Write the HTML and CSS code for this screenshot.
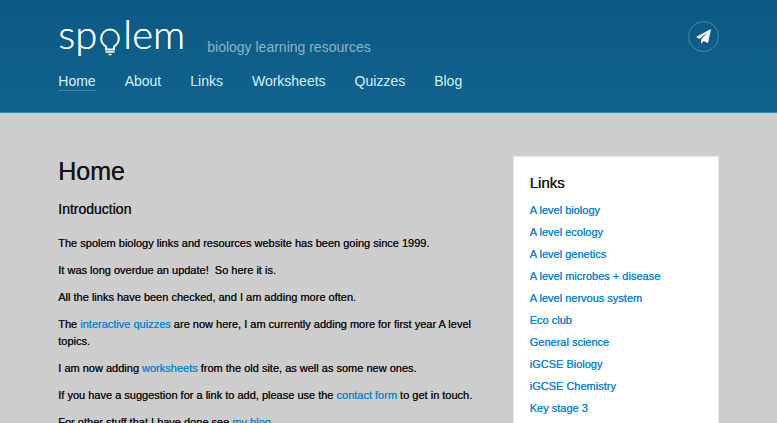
FILE: index.html
```html
<!DOCTYPE html>
<html lang="en">
    <head>
        <meta charset="utf-8">
        <title>Spolem</title>
        <link rel="stylesheet" href="styles.css">
    </head>
    <body>
        <header class="header">
            <div class="container">
                <div class="header-top">
                    <div class="brand">
                        <a class="logo" href="#" aria-label="spolem">
                            <span>sp</span>
                            <svg class="bulb" width="20" height="30" viewBox="0 0 20 30" fill="none" stroke="#fff" stroke-width="2">
                                <path d="M6 23.500v-3C2.800 18.500 1.200 15.500 1.200 12.500a8.800 9 0 0 1 17.600 0c0 3-1.600 6-4.800 8v3z"/>
                                <path d="M5.500 26h9M8.500 28.500h3" stroke-width="1.300"/>
                            </svg>
                            <span>lem</span>
                        </a>
                        <span class="tagline">biology learning resources</span>
                    </div>
                    <a class="contact" href="#" aria-label="Contact">
                        <svg width="15" height="15" viewBox="0 0 15 15" fill="#fff">
                            <path d="M15 0L0 8l3.500 1.800L12 3 5.200 10.300V15l2.300-2.900L12 14z"/>
                        </svg>
                    </a>
                </div>
                <nav class="nav">
                    <a class="active" href="#">Home</a>
                    <a href="#">About</a>
                    <a href="#">Links</a>
                    <a href="#">Worksheets</a>
                    <a href="#">Quizzes</a>
                    <a href="#">Blog</a>
                </nav>
            </div>
        </header>

        <div class="container page">
            <main class="content">
                <h1>Home</h1>
                <h2>Introduction</h2>
                <p>The spolem biology links and resources website has been going since 1999.</p>
                <p>It was long overdue an update!&nbsp; So here it is.</p>
                <p>All the links have been checked, and I am adding more often.</p>
                <p>The <a href="#">interactive quizzes</a> are now here, I am currently adding more for first year A level topics.</p>
                <p>I am now adding <a href="#">worksheets</a> from the old site, as well as some new ones.</p>
                <p>If you have a suggestion for a link to add, please use the <a href="#">contact form</a> to get in touch.</p>
                <p>For other stuff that I have done see <a href="#">my blog</a>.</p>
            </main>

            <aside class="sidebar">
                <h3>Links</h3>
                <ul>
                    <li><a href="#">A level biology</a></li>
                    <li><a href="#">A level ecology</a></li>
                    <li><a href="#">A level genetics</a></li>
                    <li><a href="#">A level microbes + disease</a></li>
                    <li><a href="#">A level nervous system</a></li>
                    <li><a href="#">Eco club</a></li>
                    <li><a href="#">General science</a></li>
                    <li><a href="#">iGCSE Biology</a></li>
                    <li><a href="#">iGCSE Chemistry</a></li>
                    <li><a href="#">Key stage 3</a></li>
                </ul>
            </aside>
        </div>
    </body>
</html>
```
FILE: styles.css
```css
* {
    box-sizing: border-box;
}

body {
    margin: 0;
    font-family: "Liberation Sans", Arial, sans-serif;
    font-size: 11px;
    line-height: 17px;
    color: #151515;
    background-color: #cdcdcd;
}

a {
    color: #0f87d0;
    text-decoration: none;
}

.container {
    width: 85%;
    margin: 0 auto;
}

.header {
    background: linear-gradient(#0b5a85, #11628f);
    border-bottom: 1px solid #3c81a5;
    padding: 16px 0 21px;
}

.header-top {
    display: flex;
    justify-content: space-between;
    align-items: center;
}

.brand {
    display: flex;
    align-items: flex-end;
    gap: 22px;
}

.logo {
    display: flex;
    align-items: flex-start;
    min-height: 40px;
    color: #fff;
    font-family: Lato, sans-serif;
    font-weight: 300;
    font-size: 40px;
    line-height: 36px;
    text-shadow: 0 0 0 currentColor;
}

.bulb {
    align-self: flex-end;
    margin: 0 3px;
}

.tagline {
    color: #90b4c5;
    font-size: 14px;
}

.contact {
    display: flex;
    justify-content: center;
    align-items: center;
    width: 31px;
    height: 31px;
    border: 1px solid #448aa8;
    border-radius: 50%;
}

.nav {
    display: flex;
    gap: 29px;
    margin-top: 16px;
}

.nav a {
    color: #d3f2fb;
    font-size: 14px;
    line-height: 18px;
    border-bottom: 1px solid transparent;
}

.nav .active {
    border-bottom-color: #3987a9;
}

.page {
    display: flex;
    align-items: flex-start;
    justify-content: space-between;
    padding-top: 43px;
}

.content,
.sidebar {
    text-shadow: 0 0 0 currentColor;
}

.content {
    width: 64%;
}

h1,
h2,
h3 {
    margin: 0;
    font-weight: normal;
}

h1 {
    font-size: 25px;
    line-height: 30px;
}

h2 {
    margin: 13px 0 16px;
    font-size: 14px;
    line-height: 20px;
}

.content p {
    margin: 0 0 10px;
}

.sidebar {
    width: 206px;
    padding: 16px;
    background-color: #fff;
    border: 1px solid #e4e4e4;
}

h3 {
    font-size: 15px;
    line-height: 20px;
}

.sidebar ul {
    list-style: none;
    margin: 6px 0 0;
    padding: 0;
}

.sidebar li {
    line-height: 22px;
}
```
